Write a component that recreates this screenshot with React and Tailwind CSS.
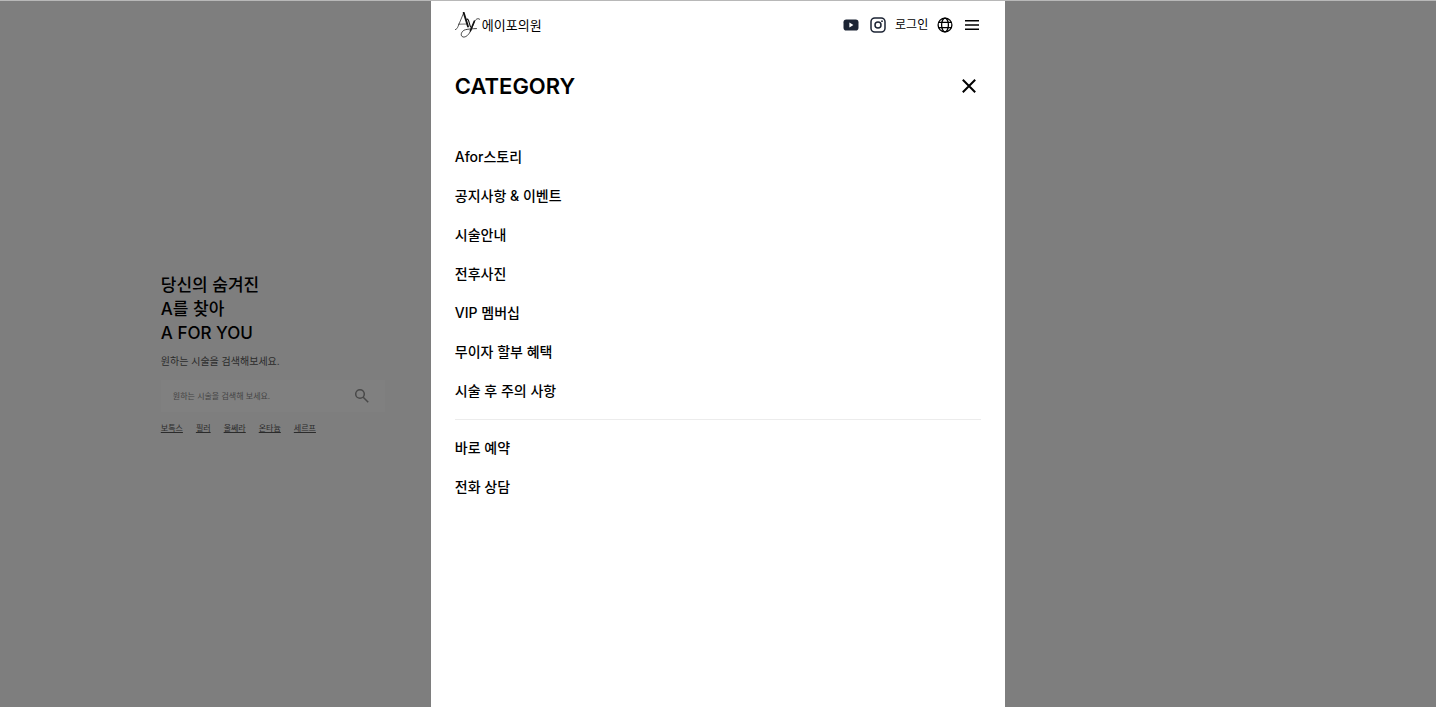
const MAIN_MENU = [
  'Afor스토리',
  '공지사항 & 이벤트',
  '시술안내',
  '전후사진',
  'VIP 멤버십',
  '무이자 할부 혜택',
  '시술 후 주의 사항',
];
const CONTACT_MENU = ['바로 예약', '전화 상담'];
const KEYWORDS = ['보톡스', '필러', '울쎄라', '온타늄', '세르프'];

function LogoMark() {
  return (
    <svg className="h-[26px] w-[26px]" viewBox="0 0 26 26" fill="none" stroke="#111" strokeLinecap="round" aria-hidden="true">
      <path d="M.4 17.600C1.600 17.400 2.300 16.200 3 14.500L8.600 1" strokeWidth=".7" />
      <path d="M8.700 .8L13 14.500" strokeWidth="1.900" />
      <path d="M3.400 12.200L11.800 12" strokeWidth=".6" />
      <path d="M11.800 7.200C14 6.600 14.200 12.500 15.600 15" strokeWidth="1.100" />
      <path d="M24.600 7.200C22.500 5.600 20.200 7.500 18.900 11L15.800 18.500C14 22.600 11 25.400 8.200 25C4.800 24.300 6 18.800 10.500 17.700C13.500 17 17.500 16.700 21.500 16.600" strokeWidth=".8" />
      <path d="M19.300 9.200L15.400 18.800" strokeWidth="1.600" />
    </svg>
  );
}

function YoutubeIcon() {
  return (
    <svg className="h-4 w-4" viewBox="0 0 16 16" aria-hidden="true">
      <rect x=".5" y="2.500" width="15" height="11" rx="2.800" fill="#1c2434" />
      <path d="M6.400 5.600v4.800l4-2.400z" fill="#fff" />
    </svg>
  );
}

function InstagramIcon() {
  return (
    <svg className="h-4 w-4" viewBox="0 0 16 16" fill="none" stroke="#1c2434" strokeWidth="1.500" aria-hidden="true">
      <rect x="1" y="1" width="14" height="14" rx="3.800" />
      <circle cx="8" cy="8" r="3" />
      <circle cx="12" cy="4.200" r=".9" fill="#1c2434" stroke="none" />
    </svg>
  );
}

function GlobeIcon() {
  return (
    <svg className="h-4 w-4" viewBox="0 0 16 16" fill="none" stroke="#000" strokeWidth="1.300" aria-hidden="true">
      <circle cx="8" cy="8" r="6.900" />
      <ellipse cx="8" cy="8" rx="3.400" ry="6.900" />
      <path d="M1.700 5.400h12.600M1.700 10.600h12.600" />
    </svg>
  );
}

function MenuIcon() {
  return (
    <svg className="h-4 w-4" viewBox="0 0 16 16" stroke="#000" strokeWidth="1.500" aria-hidden="true">
      <path d="M1 3.700h14M1 8h14M1 12.300h14" />
    </svg>
  );
}

function CloseIcon() {
  return (
    <svg className="h-4 w-4" viewBox="0 0 16 16" stroke="#000" strokeWidth="2" aria-hidden="true">
      <path d="M1.800 1.800l12.400 12.400M14.200 1.800L1.800 14.200" />
    </svg>
  );
}

function SearchIcon() {
  return (
    <svg className="h-4 w-4" viewBox="0 0 16 16" fill="none" stroke="#484848" strokeWidth="1.500" aria-hidden="true">
      <circle cx="6" cy="6" r="4.300" />
      <path d="M9.200 9.200l5 5" />
    </svg>
  );
}

function MenuList({ items }) {
  return (
    <ul className="flex flex-col gap-[15px]">
      {items.map((item) => (
        <li key={item}>
          <a href="#" className="block text-[14px] leading-6 font-medium text-black">
            {item}
          </a>
        </li>
      ))}
    </ul>
  );
}

function SearchIntro() {
  return (
    <section className="w-56">
      <h1 className="text-[17px] leading-6 font-medium text-black">
        당신의 숨겨진
        <br />
        A를 찾아
        <br />A FOR YOU
      </h1>
      <p className="mt-2 text-[10px] leading-4 text-[#2b2b2b]">원하는 시술을 검색해보세요.</p>
      <form className="mt-[11px] flex h-8 items-center bg-[#808080] pr-[15px] pl-3">
        <input
          type="text"
          aria-label="시술 검색"
          placeholder="원하는 시술을 검색해 보세요."
          className="min-w-0 flex-1 bg-transparent text-[8px] text-black outline-none placeholder:text-[#444] placeholder:opacity-100"
        />
        <button type="submit" aria-label="검색">
          <SearchIcon />
        </button>
      </form>
      <div className="mt-2 flex gap-[13px]">
        {KEYWORDS.map((word) => (
          <a key={word} href="#" className="text-[8px] leading-4 text-[#2b2b2b] underline underline-offset-1">
            {word}
          </a>
        ))}
      </div>
    </section>
  );
}

export default function App() {
  return (
    <div
      lang="ko"
      className="grid min-h-screen grid-cols-[3fr_4fr_3fr] border-t border-[#b8b8b8] bg-[#7e7e7e] font-['Inter','Noto_Sans_CJK_KR',sans-serif]"
    >
      <div className="flex items-center justify-end pt-px pr-[46px]">
        <SearchIntro />
      </div>

      <main className="bg-white px-6">
        <header className="flex h-12 items-center justify-between">
          <a href="#" className="flex items-center gap-px">
            <LogoMark />
            <span className="text-[13px] leading-4 font-normal text-black">에이포의원</span>
          </a>
          <nav aria-label="바로가기" className="flex items-center gap-[11px] pr-px">
            <a href="#" aria-label="YouTube"><YoutubeIcon /></a>
            <a href="#" aria-label="Instagram"><InstagramIcon /></a>
            <a href="#" className="-mx-0.5 text-[12px] leading-4 text-black">로그인</a>
            <button type="button" aria-label="언어 선택"><GlobeIcon /></button>
            <button type="button" aria-label="메뉴"><MenuIcon /></button>
          </nav>
        </header>

        <div className="mt-[21px] flex h-8 items-center justify-between pr-1">
          <h2 className="text-[22px] leading-8 font-semibold text-black">CATEGORY</h2>
          <button type="button" aria-label="닫기"><CloseIcon /></button>
        </div>

        <nav aria-label="카테고리" className="mt-[43px]">
          <MenuList items={MAIN_MENU} />
          <hr className="my-4 border-[#ececec]" />
          <MenuList items={CONTACT_MENU} />
        </nav>
      </main>
    </div>
  );
}
